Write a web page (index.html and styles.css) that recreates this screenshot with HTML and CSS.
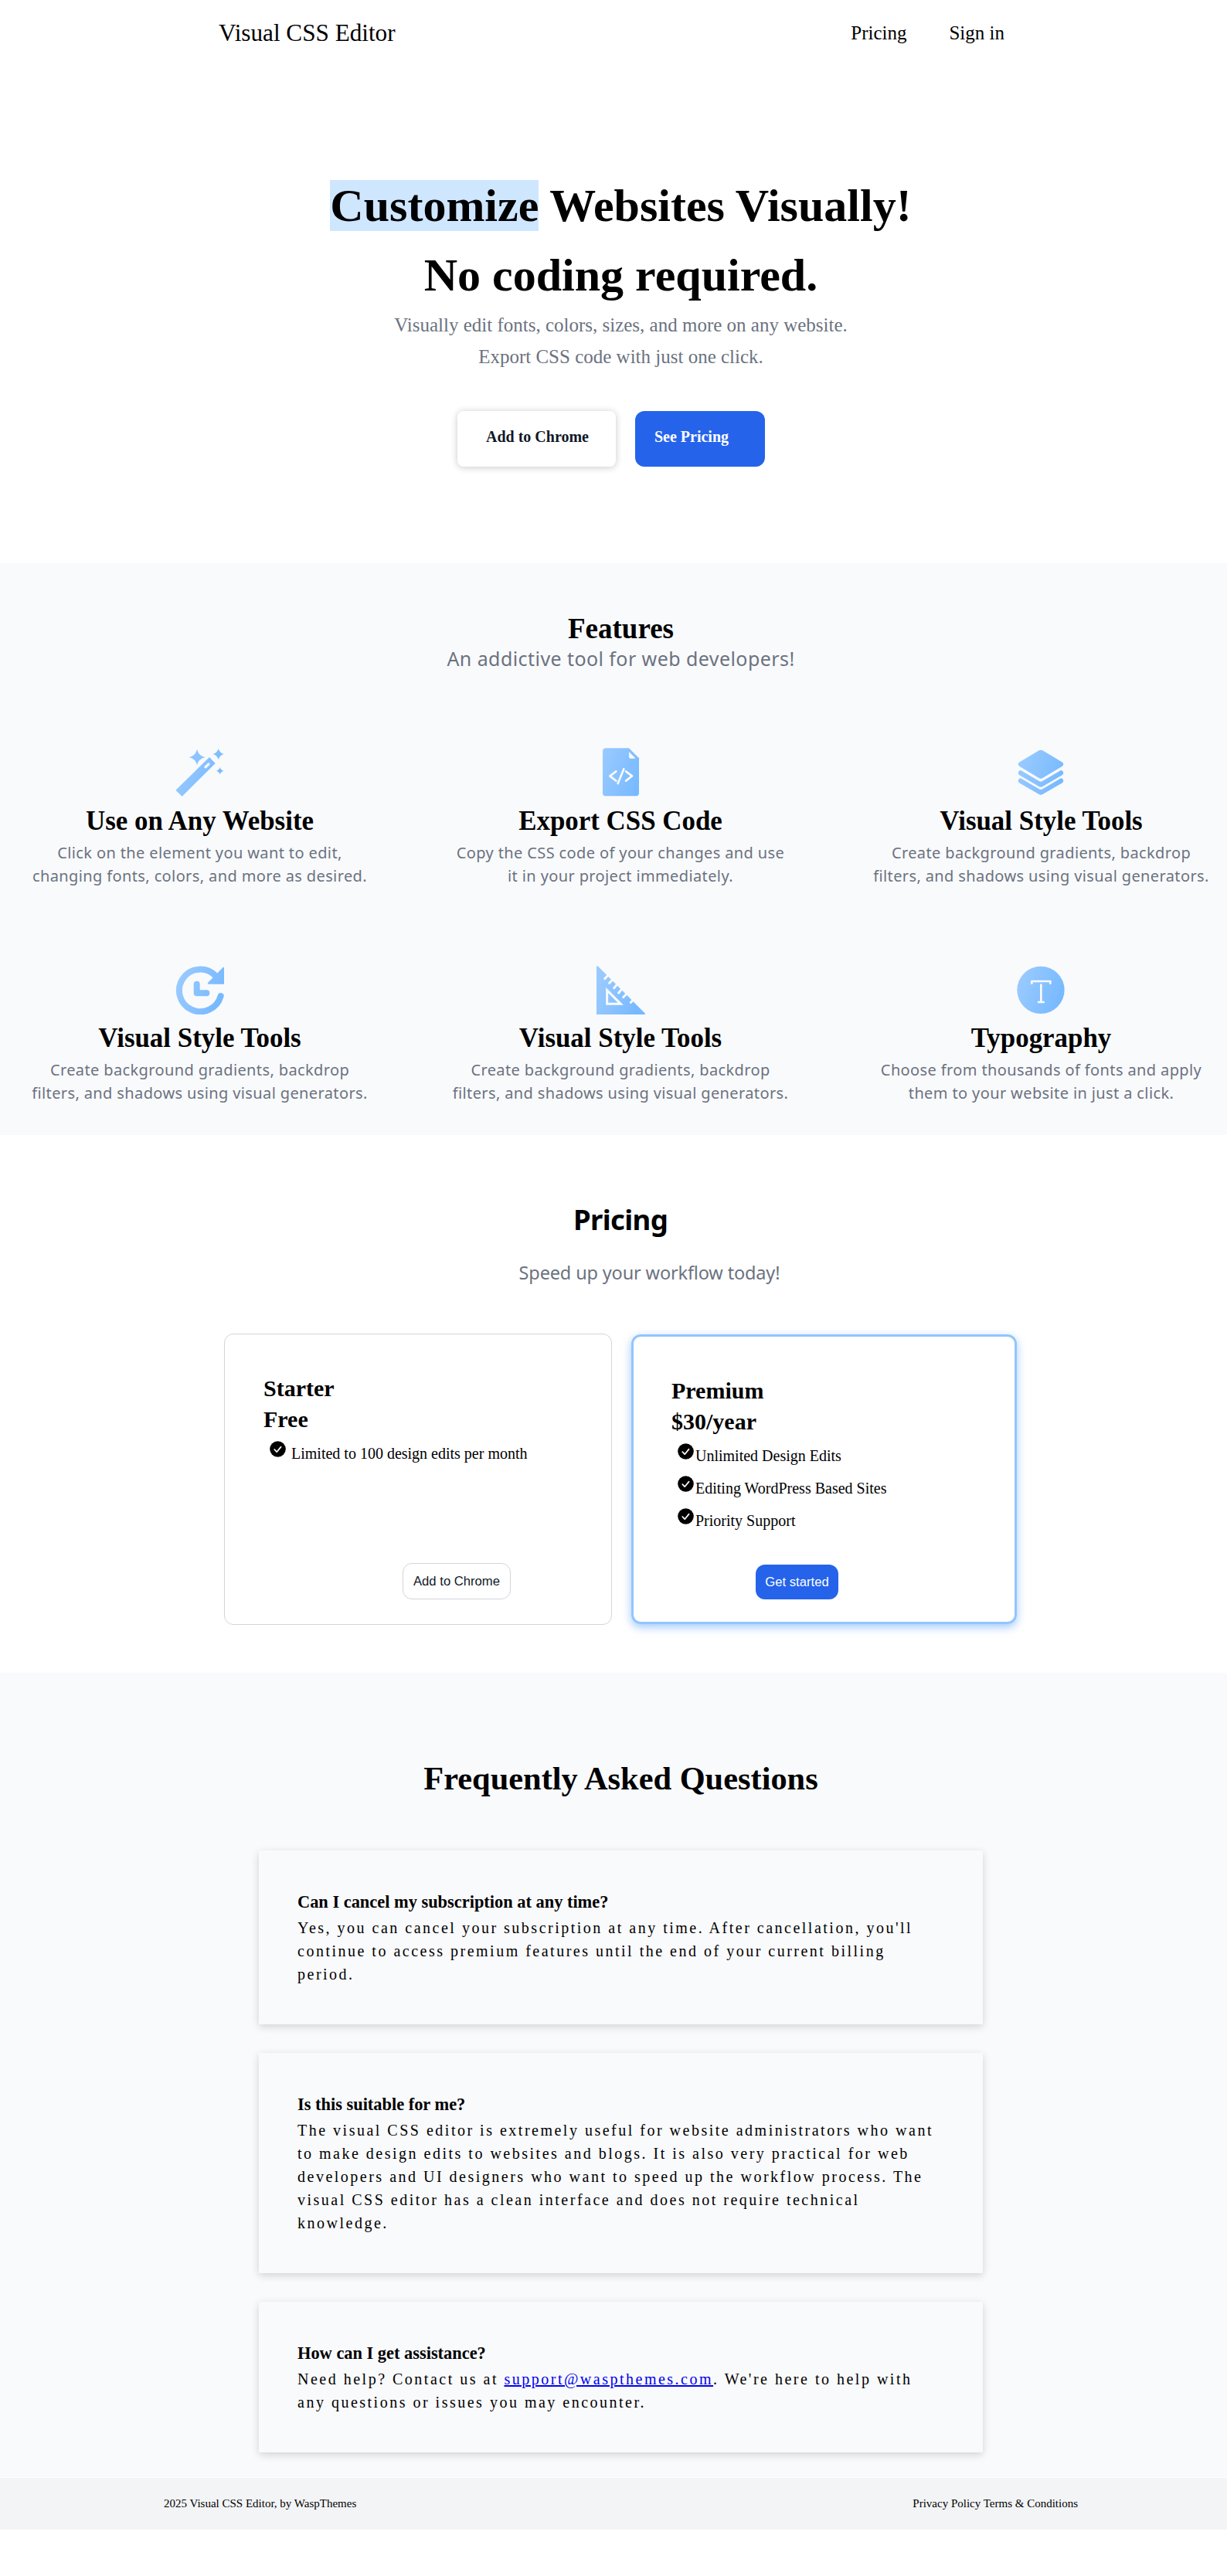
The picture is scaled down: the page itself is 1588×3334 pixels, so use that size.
FILE: index.html
```html
<!DOCTYPE html>
<html lang="en">
<head>
<meta charset="utf-8">
<title>Visual CSS Editor</title>
<link rel="stylesheet" href="styles.css">
</head>
<body>
<svg class="defs" width="0" height="0" aria-hidden="true">
  <defs>
    <linearGradient id="sky" gradientUnits="userSpaceOnUse" x1="10" y1="60" x2="180" y2="120">
      <stop offset="0" stop-color="#99caff"/><stop offset="1" stop-color="#76b9ff"/>
    </linearGradient>
    <symbol id="check" viewBox="0 0 21 21">
      <circle cx="10.5" cy="10.5" r="10.3" fill="#000"/>
      <path d="M6.2 11l3 3.2 5.4-6.6" fill="none" stroke="#fff" stroke-width="1.7" stroke-linecap="round" stroke-linejoin="round"/>
    </symbol>
  </defs>
</svg>
<header class="header">
  <a class="brand">Visual CSS Editor</a>
  <nav class="nav"><a>Pricing</a><a>Sign in</a></nav>
</header>

<section class="hero">
  <h1 class="hero-title"><span class="mark">Customize</span> Websites Visually!<br>No coding required.</h1>
  <p class="hero-text">Visually edit fonts, colors, sizes, and more on any website.<br>Export CSS code with just one click.</p>
  <div class="hero-actions">
    <a class="btn-chrome">Add to Chrome</a>
    <a class="btn-pricing">See Pricing</a>
  </div>
</section>

<section class="features">
  <h2 class="features-title">Features</h2>
  <p class="features-sub">An addictive tool for web developers!</p>
  <div class="grid">
    <article class="feature">
      <svg class="icon" viewBox="0 0 189 189" fill="url(#sky)">
        <path d="M132 36l23 24L26 188 1 164z"/>
        <path d="M84 5q6 25 31 31q-25 6-31 31q-6-25-31-31q25-6 31-31zM167 3q5 16 21 21q-16 5-21 21q-5-16-21-21q16-5 21-21zM173 75q3 11 14 14q-11 3-14 14q-3-11-14-14q11-3 14-14z"/>
        <path d="M117 74l12-11" stroke="#f9fafc" stroke-width="10" stroke-linecap="round"/>
      </svg>
      <h3>Use on Any Website</h3>
      <p>Click on the element you want to edit,<br>changing fonts, colors, and more as desired.</p>
    </article>
    <article class="feature">
      <svg class="icon" viewBox="0 0 189 189" fill="url(#sky)">
        <path d="M36 1h90l39 39v135q0 12-12 12H36q-12 0-12-12V13Q24 1 36 1z"/>
        <path d="M127 17v18q0 5 5 5h18z" fill="#f9fafc" stroke="#f9fafc" stroke-width="2" stroke-linejoin="round"/>
        <path d="M76 91l-24 18 24 19M106 82l-23 56M114 91l24 18-24 19" fill="none" stroke="#f9fafc" stroke-width="8" stroke-linecap="round" stroke-linejoin="round"/>
      </svg>
      <h3>Export CSS Code</h3>
      <p>Copy the CSS code of your changes and use<br>it in your project immediately.</p>
    </article>
    <article class="feature">
      <svg class="icon" viewBox="0 0 189 189" fill="url(#sky)">
        <path d="M86 10q7-4 14 0l75 45q12 8 0 17l-75 45q-7 4-14 0L11 72q-12-9 0-17z"/>
        <path d="M14 86l73 43q6 3 12 0l73-43q14 6 6 18l-78 46q-7 3-14 0L8 104q-8-12 6-18z"/>
        <path d="M14 117l73 43q6 3 12 0l73-43q14 6 6 18l-78 45q-7 4-14 0L8 135q-8-12 6-18z"/>
      </svg>
      <h3>Visual Style Tools</h3>
      <p>Create background gradients, backdrop<br>filters, and shadows using visual generators.</p>
    </article>
    <article class="feature">
      <svg class="icon" viewBox="0 0 189 189" fill="url(#sky)">
        <path d="M176 117A82 82 0 1 1 155 38" fill="none" stroke="url(#sky)" stroke-width="24" stroke-linecap="round"/>
        <path d="M184 7q6-4 6 2v62h-62q-5-1 0-7z"/>
        <path d="M83 71v35h38" fill="none" stroke="url(#sky)" stroke-width="24" stroke-linecap="round" stroke-linejoin="round"/>
      </svg>
      <h3>Visual Style Tools</h3>
      <p>Create background gradients, backdrop<br>filters, and shadows using visual generators.</p>
    </article>
    <article class="feature">
      <svg class="icon" viewBox="0 0 189 189" fill="url(#sky)">
        <path d="M0 3q1-5 7 0l182 182v4H0z"/>
        <path d="M46 35L32 50M64 52L50 67M82 70L68 86M100 88l-14 17M118 107l-14 15M143 132l-10 10M41 95v53h53z" fill="none" stroke="#f9fafc" stroke-width="9" stroke-linecap="round"/>
      </svg>
      <h3>Visual Style Tools</h3>
      <p>Create background gradients, backdrop<br>filters, and shadows using visual generators.</p>
    </article>
    <article class="feature">
      <svg class="icon" viewBox="0 0 189 189" fill="url(#sky)">
        <circle cx="93" cy="94" r="92"/>
        <path d="M58 68v-8h72v8M94 74v66M84 141h20" fill="none" stroke="#f9fafc" stroke-width="8" stroke-linecap="round" stroke-linejoin="round"/>
      </svg>
      <h3>Typography</h3>
      <p>Choose from thousands of fonts and apply<br>them to your website in just a click.</p>
    </article>
  </div>
</section>

<section class="pricing">
  <h2 class="pricing-title">Pricing</h2>
  <p class="pricing-sub">Speed up your workflow today!</p>
  <div class="plans">
    <div class="plan starter">
      <h3>Starter</h3>
      <h3>Free</h3>
      <ul>
        <li><svg class="check"><use href="#check"/></svg><span>Limited to 100 design edits per month</span></li>
      </ul>
      <button class="plan-btn">Add to Chrome</button>
    </div>
    <div class="plan premium">
      <h3>Premium</h3>
      <h3>$30/year</h3>
      <ul>
        <li><svg class="check"><use href="#check"/></svg><span>Unlimited Design Edits</span></li>
        <li><svg class="check"><use href="#check"/></svg><span>Editing WordPress Based Sites</span></li>
        <li><svg class="check"><use href="#check"/></svg><span>Priority Support</span></li>
      </ul>
      <button class="plan-btn primary">Get started</button>
    </div>
  </div>
</section>

<section class="faq">
  <h2 class="faq-title">Frequently Asked Questions</h2>
  <div class="faq-list">
    <div class="faq-item">
      <h4>Can I cancel my subscription at any time?</h4>
      <p>Yes, you can cancel your subscription at any time. After cancellation, you'll continue to access premium features until the end of your current billing period.</p>
    </div>
    <div class="faq-item">
      <h4>Is this suitable for me?</h4>
      <p>The visual CSS editor is extremely useful for website administrators who want to make design edits to websites and blogs. It is also very practical for web developers and UI designers who want to speed up the workflow process. The visual CSS editor has a clean interface and does not require technical knowledge.</p>
    </div>
    <div class="faq-item">
      <h4>How can I get assistance?</h4>
      <p>Need help? Contact us at <a class="mail" href="mailto:support@waspthemes.com">support@waspthemes.com</a>. We're here to help with any questions or issues you may encounter.</p>
    </div>
  </div>
</section>

<footer class="footer">
  <span>2025 Visual CSS Editor, by WaspThemes</span>
  <span>Privacy Policy Terms &amp; Conditions</span>
</footer>
</body>
</html>
```
FILE: styles.css
```css
* { box-sizing: border-box; margin: 0; padding: 0; }
body { background: #fff; color: #000; font-family: "Liberation Serif", "Times New Roman", serif; overflow-x: hidden; }
.defs { position: absolute; }

.header { display: flex; justify-content: space-between; align-items: center; height: 85px; padding: 0 288px 0 283px; }
.brand { font-size: 31.2px; }
.nav { display: flex; gap: 55px; font-size: 25px; }

.hero { height: 644px; padding: 136px 0 0 19px; text-align: center; }
.hero-title { font-size: 60px; line-height: 90px; }
.mark { background: #cfe6ff; }
.hero-text { margin-top: -1px; font-size: 25px; line-height: 41px; color: #6b7280; }
.hero-actions { display: flex; gap: 25px; margin: 50px 0 0 573px; font-size: 20px; font-weight: bold; line-height: 22px; }
.btn-chrome { padding: 22px 35px 28px 37px; border-radius: 8px; color: #111827; box-shadow: 0 1px 10px rgba(0, 0, 0, .22); }
.btn-pricing { width: 168px; padding: 22px 0 28px 25px; border-radius: 12px; background: #2563eb; color: #fff; text-align: left; }

.features { height: 740px; padding-top: 63px; background: #f9fafc; }
.features-title { padding-left: 19px; font-size: 37px; line-height: 43px; text-align: center; }
.features-sub { padding-left: 19px; font: 25px/34px "Noto Sans", sans-serif; letter-spacing: .43px; color: #6b7280; text-align: center; }
.grid { display: grid; grid-template-columns: repeat(3, 444px); column-gap: 100.5px; grid-auto-rows: 281.5px; margin: 99px 0 0 36.5px; }
.feature { display: flex; flex-direction: column; align-items: center; text-align: center; white-space: nowrap; }
.icon { width: 63px; height: 63px; }
.feature h3 { margin-top: 11.5px; font-size: 34.9px; line-height: 40px; }
.feature p { margin-top: 6px; font: 20px/30px "Noto Sans", sans-serif; letter-spacing: .38px; color: #6b7280; }

.pricing { height: 696px; padding-top: 84px; }
.pricing-title { padding-left: 18px; font: bold 36.5px/50px "Noto Sans", sans-serif; letter-spacing: -.6px; text-align: center; }
.pricing-sub { margin-top: 26px; padding-left: 93px; font: 23.5px/36px "Noto Sans", sans-serif; letter-spacing: -.15px; color: #6b7280; text-align: center; }
.plans { display: flex; align-items: center; gap: 25px; margin: 61px 0 0 290px; }
.plan { display: flex; flex-direction: column; align-items: flex-start; border-radius: 12px; }
.plan h3 { font-size: 30px; line-height: 40px; }
.plan ul { list-style: none; margin-top: 4px; padding-left: 8px; }
.plan li { display: flex; align-items: center; height: 42.2px; font-size: 20px; }
.check { width: 21px; height: 21px; margin-bottom: 12px; }
.starter { width: 502px; height: 377px; padding: 49.5px 50px 32px; border: 1px solid #d3d5d8; }
.starter .check { margin-right: 7px; }
.premium { width: 499px; height: 375px; padding: 49.5px 49px 29px; border: 3px solid #93c5fd; box-shadow: 0 4px 12px rgba(96, 165, 250, .6); }
.premium .check { margin-right: 2px; }
.plan-btn { width: 140px; height: 47px; margin: auto 0 0 180px; border: 1px solid #d3d5d8; border-radius: 12px; background: #fff; color: #111827; font: 16.67px "Liberation Sans", Arial, sans-serif; }
.plan-btn.primary { width: 107px; height: 45px; margin-left: 109px; border: 0; background: #2563eb; color: #fff; }

.faq { height: 1041px; padding-top: 112px; background: #f9fafc; }
.faq-title { padding-left: 19px; font-size: 42.4px; line-height: 50px; text-align: center; }
.faq-list { display: flex; flex-direction: column; gap: 37px; width: 937px; margin: 68px 0 0 335px; }
.faq-item { padding: 50px; background: #f9fafc; box-shadow: 0 3px 10px rgba(0, 0, 0, .16); }
.faq-item h4 { margin-bottom: 1px; font-size: 22.4px; line-height: 34px; }
.faq-item p { font-size: 20px; line-height: 30px; letter-spacing: 2.5px; }
.mail { color: #00e; }

.footer { display: flex; justify-content: space-between; align-items: center; height: 67px; margin-top: 1px; padding: 0 193px 0 212px; background: #f3f4f6; font-size: 15px; }
```
